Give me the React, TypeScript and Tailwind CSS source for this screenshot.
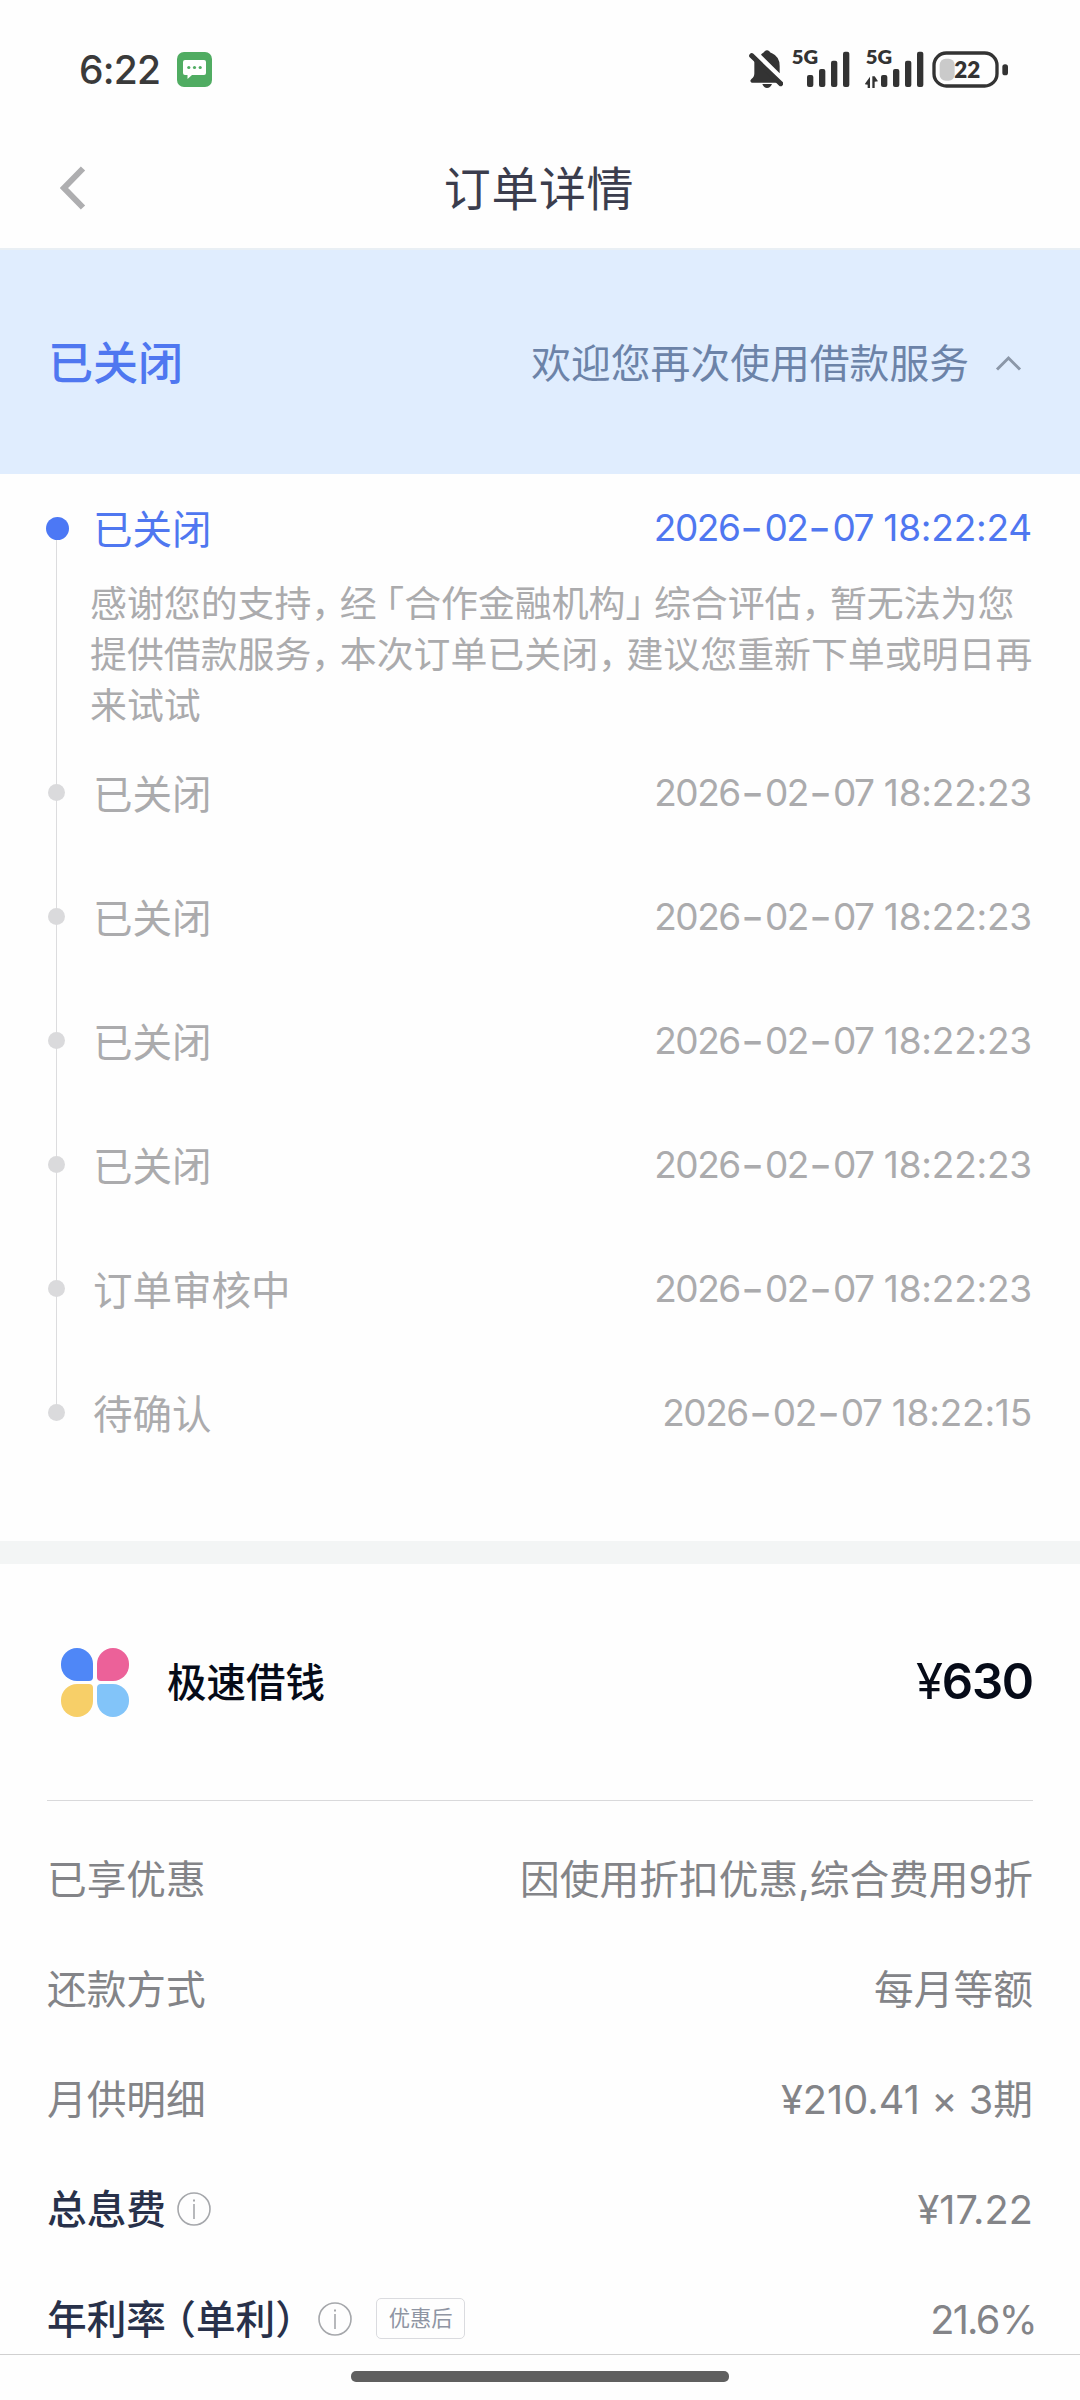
import { Fragment, type ReactNode } from "react";

function BellOff() {
  return (
    <svg className="block h-[38px] w-[34px]" viewBox="0 0 102 114" fill="none">
      <path d="M42 9 Q46 6 47 4 Q54 -3 61 4 Q63 8 69 10 Q92 20 92 48 V70 L36 14 Q39 10 42 9Z" fill="#333" />
      <path d="M16 26 L88 98 H8 Q0 93 8 86 Q16 82 16 70 Z" fill="#333" />
      <path d="M40 102 H69 Q64 114 54 114 Q45 114 40 102Z" fill="#333" />
      <path d="M8 17 L95 101" stroke="#333" strokeWidth="15" strokeLinecap="round" />
    </svg>
  );
}

function Signal({ data }: { data?: boolean }) {
  return (
    <svg className="block h-[44px] w-[60px]" viewBox="0 -12 180 132" fill="#333">
      <text x="2" y="47" fontFamily="Lato" fontWeight="800" fontSize="59" textLength="79" lengthAdjust="spacingAndGlyphs">5G</text>
      {data && (
        <path d="M15 86 V120 H8 V110 L-1 109 Z M22 120 V85 H29 L39 100 L29 101 V120 Z" />
      )}
      <rect x="48" y="81" width="19" height="36" rx="6" />
      <rect x="84" y="63" width="19" height="54" rx="6" />
      <rect x="120" y="38" width="19" height="79" rx="6" />
      <rect x="156" y="11" width="19" height="106" rx="6" />
    </svg>
  );
}

function Battery() {
  return (
    <svg className="block h-[37px] w-[77px]" viewBox="0 0 231 111">
      <rect x="6" y="6" width="189" height="99" rx="37" fill="none" stroke="#333" strokeWidth="10" />
      <rect x="23" y="23" width="45" height="66" rx="18" fill="#cacaca" />
      <rect x="211" y="40" width="17" height="33" rx="8" fill="#333" />
      <text x="67" y="82" fontFamily="Lato" fontWeight="800" fontSize="66" textLength="78" lengthAdjust="spacingAndGlyphs" fill="#333">22</text>
    </svg>
  );
}

function StatusBar() {
  return (
    <div className="flex h-[125px] shrink-0 items-start pl-[79px] pr-[71px]">
      <span className="mt-[46px] w-[98px] text-[39px] leading-[48px] font-medium tracking-[-0.8px] text-[#3a3a3a]">6:22</span>
      <svg className="mt-[52px] block h-[35px] w-[35px]" viewBox="0 0 35 35">
        <rect width="35" height="35" rx="7" fill="#50ac62" />
        <path d="M8 8 H27 Q29 8 29 10 V21 Q29 23 27 23 H15 L10.5 27 V23 H8 Q6 23 6 21 V10 Q6 8 8 8Z" fill="#fff" />
        <circle cx="11.8" cy="15.5" r="1.6" fill="#50ac62" />
        <circle cx="17.5" cy="15.5" r="1.6" fill="#50ac62" />
        <circle cx="23.2" cy="15.5" r="1.6" fill="#50ac62" />
      </svg>
      <div className="ml-auto flex items-start">
        <div className="mt-[50px] mr-[8px]"><BellOff /></div>
        <div className="mt-[44px] mr-[14px]"><Signal /></div>
        <div className="mt-[44px] mr-[7px]"><Signal data /></div>
        <div className="mt-[51px]"><Battery /></div>
      </div>
    </div>
  );
}

function Info() {
  return (
    <svg className="relative -top-[2px] block h-[34px] w-[34px] shrink-0" viewBox="0 0 34 34" fill="none" stroke="#a5a7ab" strokeWidth="1.6">
      <circle cx="17" cy="17" r="16" />
      <path d="M17 12 V27" />
      <path d="M17 7.5 V9.5" strokeWidth="2" />
    </svg>
  );
}

/* Half-width punctuation with a little air after it. */
function Pause({ children }: { children: ReactNode }) {
  return <span className="mr-[10px] [font-feature-settings:'halt']">{children}</span>;
}

function Time({ value }: { value: string }) {
  const [date, clock] = value.split(" ");
  return (
    <time className="ml-auto text-[37px] tracking-[-1.45px] whitespace-pre">
      {date.split("-").map((part, i) => (
        <Fragment key={i}>
          {i > 0 && <span className="inline-block w-[25px] scale-x-135 text-center font-medium tracking-normal">-</span>}
          {part}
        </Fragment>
      ))}
      <span className="tracking-[-0.2px]"> {clock}</span>
    </time>
  );
}

const history = [
  { label: "已关闭", time: "2026-02-07 18:22:23" },
  { label: "已关闭", time: "2026-02-07 18:22:23" },
  { label: "已关闭", time: "2026-02-07 18:22:23" },
  { label: "已关闭", time: "2026-02-07 18:22:23" },
  { label: "订单审核中", time: "2026-02-07 18:22:23" },
  { label: "待确认", time: "2026-02-07 18:22:15" },
];

function Timeline() {
  return (
    <section className="relative h-[1067px] shrink-0 pl-[46px] pr-[48px] pt-[24px]">
      <div className="absolute left-[56px] top-[54px] h-[885px] w-px bg-[#dcdcde]" />
      <div className="relative flex h-[60px] items-center text-[#4f77f0]">
        <span className="h-[23px] w-[23px] rounded-full bg-[#4c78f5]" />
        <span className="relative top-[3px] ml-[24px] text-[39.5px]">已关闭</span>
        <Time value="2026-02-07 18:22:24" />
      </div>
      <p className="ml-[44px] mt-[20px] w-[960px] text-[36.9px] leading-[51px] whitespace-nowrap text-[#ababad]">
        感谢您的支持<Pause>，</Pause>经<span className="ml-[9px] [font-feature-settings:'halt']">「</span>合作金融机构<Pause>」</Pause>综合评估<Pause>，</Pause>暂无法为您<br />
        提供借款服务<Pause>，</Pause>本次订单已关闭<Pause>，</Pause>建议您重新下单或明日再<br />
        来试试
      </p>
      <ul>
        {history.map((item, i) => (
          <li key={i} className="relative flex h-[123.9px] items-center pl-[2px] text-[#ababad]">
            <span className="h-[17px] w-[17px] rounded-full bg-[#dadadc]" />
            <span className="relative top-[3px] ml-[28px] text-[39.5px]">{item.label}</span>
            <Time value={item.time} />
          </li>
        ))}
      </ul>
    </section>
  );
}

function Row({ label, value, tight }: { label: ReactNode; value: string; tight?: boolean }) {
  return (
    <div className="flex h-[110px] items-center justify-between text-[39.7px] text-[#838488]">
      <div className="flex items-center">{label}</div>
      <span className={tight ? "-mr-[3px] tracking-[-1.7px]" : "tracking-[0.05px]"}>{value}</span>
    </div>
  );
}

export default function App() {
  return (
    <div className="flex h-[2400px] w-[1080px] flex-col overflow-hidden bg-[#fefefe] font-['Inter','Noto_Sans_CJK_SC',sans-serif]" lang="zh-CN">
      <StatusBar />
      <header className="relative flex h-[125px] shrink-0 items-center justify-center border-b-2 border-[#e9eff4] pr-[2px]">
        <svg className="absolute left-[60px] top-[41px] h-[44px] w-[26px]" viewBox="0 0 26 44" fill="none" stroke="#aeaeb0" strokeWidth="6">
          <path d="M23 2.5 L4 22 L23 41.5" />
        </svg>
        <h1 className="relative top-[3px] text-[47px] tracking-[0.6px] text-[#3b3d4d]">订单详情</h1>
      </header>
      <section className="flex h-[224px] shrink-0 items-center bg-[#e0edfe] pl-[48px] pr-[58px]">
        <strong className="relative top-[2px] text-[45px] font-medium text-[#4f77f0]">已关闭</strong>
        <span className="relative top-[2px] ml-auto text-[39.8px] text-[#6c83a8]">欢迎您再次使用借款服务</span>
        <svg className="relative top-[1px] ml-[26px] h-[16px] w-[27px]" viewBox="0 0 27 16" fill="none" stroke="#8b97a8" strokeWidth="3">
          <path d="M2 14.5 L13.5 3 L25 14.5" />
        </svg>
      </section>
      <Timeline />
      <div className="h-[23px] shrink-0 bg-[#f3f5f5]" />
      <section className="min-h-0 flex-1 overflow-hidden px-[47px]">
        <div className="flex h-[237px] items-center border-b border-[#d9d9db]">
          <div className="ml-[14px] grid grid-cols-2 gap-x-[4px] gap-y-[3px]">
            <i className="h-[33px] w-[32px] rounded-[16px] rounded-br-[4px] bg-[#4f87f7]" />
            <i className="h-[33px] w-[32px] rounded-[16px] rounded-bl-[4px] bg-[#ec6199]" />
            <i className="h-[33px] w-[32px] rounded-[16px] rounded-tr-[4px] bg-[#f7cf68]" />
            <i className="h-[33px] w-[32px] rounded-[16px] rounded-tl-[4px] bg-[#82c4f9]" />
          </div>
          <span className="relative top-[2px] ml-[38px] text-[39.5px] font-medium text-[#060b18]">极速借钱</span>
          <span className="ml-auto text-[49px] font-semibold tracking-[-1.2px] text-[#060b18]"><span className="font-normal">¥</span>630</span>
        </div>
        <div className="pt-[25px]">
          <Row label="已享优惠" value="因使用折扣优惠,综合费用9折" />
          <Row label="还款方式" value="每月等额" />
          <Row label="月供明细" value="¥210.41 × 3期" />
          <Row
            label={<><span className="font-medium text-[#28314a]">总息费</span><span className="ml-[11px]"><Info /></span></>}
            value="¥17.22"
          />
          <Row
            label={
              <>
                <span className="font-medium whitespace-nowrap text-[#28314a]">年利率<span className="ml-[10px] [font-feature-settings:'halt']">（</span>单利<span className="[font-feature-settings:'halt']">）</span></span>
                <span className="ml-[23px]"><Info /></span>
                <span className="relative -top-[2px] ml-[24px] flex h-[41px] w-[89px] items-center justify-center rounded-[5px] border-[1.5px] border-[#dadbdf] text-[21.3px] text-[#8f95a3]">优惠后</span>
              </>
            }
            value="21.6%"
            tight
          />
        </div>
      </section>
      <footer className="flex h-[46px] shrink-0 justify-center border-t border-[#d0d0d0] pt-[16px]">
        <div className="h-[11px] w-[378px] rounded-[5px] bg-[#5f5f5f]" />
      </footer>
    </div>
  );
}
